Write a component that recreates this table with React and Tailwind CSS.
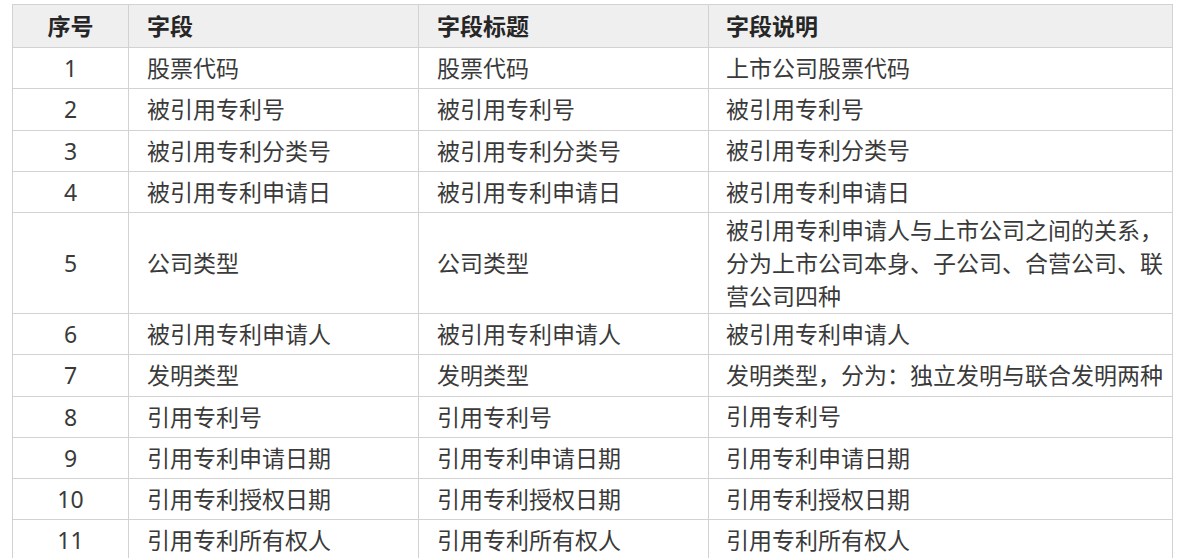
import React from 'react'

const rows = [
  ['1', '股票代码', '股票代码', '上市公司股票代码'],
  ['2', '被引用专利号', '被引用专利号', '被引用专利号'],
  ['3', '被引用专利分类号', '被引用专利分类号', '被引用专利分类号'],
  ['4', '被引用专利申请日', '被引用专利申请日', '被引用专利申请日'],
  [
    '5',
    '公司类型',
    '公司类型',
    ['被引用专利申请人与上市公司之间的关系，', '分为上市公司本身、子公司、合营公司、联', '营公司四种'],
  ],
  ['6', '被引用专利申请人', '被引用专利申请人', '被引用专利申请人'],
  ['7', '发明类型', '发明类型', '发明类型，分为：独立发明与联合发明两种'],
  ['8', '引用专利号', '引用专利号', '引用专利号'],
  ['9', '引用专利申请日期', '引用专利申请日期', '引用专利申请日期'],
  ['10', '引用专利授权日期', '引用专利授权日期', '引用专利授权日期'],
  ['11', '引用专利所有权人', '引用专利所有权人', '引用专利所有权人'],
]

const font = { fontFamily: '"Noto Sans", "Noto Sans CJK SC", sans-serif' }

function App() {
  return (
    <div className="bg-white w-[1179px] h-[558px] overflow-hidden pt-[4px] pl-[12px]" style={font}>
      <table className="border-collapse table-fixed w-[1160px] text-[23px] text-[#3a3a3a]">
        <colgroup>
          <col className="w-[116px]" />
          <col className="w-[290px]" />
          <col className="w-[290px]" />
          <col className="w-[464px]" />
        </colgroup>
        <thead>
          <tr className="h-[43px] bg-[#efefef] text-[#262626]">
            <th className="border border-[#d2d2d2] font-bold text-center leading-[32px]">序号</th>
            <th className="border border-[#d2d2d2] font-bold text-left pl-[18px] leading-[32px]">字段</th>
            <th className="border border-[#d2d2d2] font-bold text-left pl-[18px] leading-[32px]">字段标题</th>
            <th className="border border-[#d2d2d2] font-bold text-left pl-[17px] leading-[32px]">字段说明</th>
          </tr>
        </thead>
        <tbody>
          {rows.map(([no, field, title, desc]) => {
            const multi = Array.isArray(desc)
            return (
              <tr key={no} className={multi ? 'h-[101px]' : 'h-[41.25px]'}>
                <td className="border border-[#d2d2d2] text-center leading-[32px]">{no}</td>
                <td className="border border-[#d2d2d2] pl-[18px] leading-[32px] whitespace-nowrap">{field}</td>
                <td className="border border-[#d2d2d2] pl-[18px] leading-[32px] whitespace-nowrap">{title}</td>
                <td className="border border-[#d2d2d2] pl-[17px] pr-[4px] whitespace-nowrap">
                  {multi ? (
                    desc.map((line, i) => (
                      <div key={i} className="leading-[33px]">
                        {line}
                      </div>
                    ))
                  ) : (
                    <span className="leading-[32px]">{desc}</span>
                  )}
                </td>
              </tr>
            )
          })}
        </tbody>
      </table>
    </div>
  )
}

export default App
